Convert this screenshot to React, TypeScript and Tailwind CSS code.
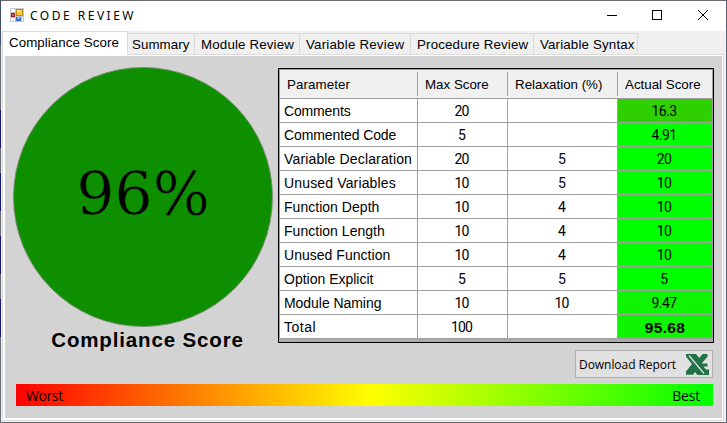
const tabs = [
  { label: "Summary", box: "w-[67px]", text: "pl-[4px] tracking-[0.05px]" },
  { label: "Module Review", box: "w-[105px]", text: "pl-[6px] tracking-[0.15px]" },
  { label: "Variable Review", box: "w-[111px]", text: "pl-[6px] tracking-[0.2px]" },
  { label: "Procedure Review", box: "w-[123px]", text: "pl-[6px] tracking-[0.15px]" },
  { label: "Variable Syntax", box: "w-[104px]", text: "pl-[6px] tracking-[0.15px]" },
];

const rows = [
  { name: "Comments", track: "tracking-[-0.15px]", max: "20", relax: "", score: "16.3", bg: "bg-[#2fd000]" },
  { name: "Commented Code", track: "tracking-[-0.1px]", max: "5", relax: "", score: "4.91", bg: "bg-[#00ff00]" },
  { name: "Variable Declaration", track: "tracking-[0.15px]", max: "20", relax: "5", score: "20", bg: "bg-[#00ff00]" },
  { name: "Unused Variables", track: "tracking-[0.15px]", max: "10", relax: "5", score: "10", bg: "bg-[#00ff00]" },
  { name: "Function Depth", track: "tracking-[0.03px]", max: "10", relax: "4", score: "10", bg: "bg-[#00ff00]" },
  { name: "Function Length", track: "tracking-[0.03px]", max: "10", relax: "4", score: "10", bg: "bg-[#00ff00]" },
  { name: "Unused Function", track: "tracking-[0.03px]", max: "10", relax: "4", score: "10", bg: "bg-[#00ff00]" },
  { name: "Option Explicit", track: "tracking-[0px]", max: "5", relax: "5", score: "5", bg: "bg-[#00ff00]" },
  { name: "Module Naming", track: "tracking-[-0.05px]", max: "10", relax: "10", score: "9.47", bg: "bg-[#0df500]" },
  { name: "Total", track: "tracking-[0.5px]", max: "100", relax: "", score: "95.68", bg: "bg-[#0df500]" },
];

function AppIcon() {
  return (
    <svg width="14" height="14" viewBox="0 0 14 14" shapeRendering="crispEdges">
      <rect width="14" height="14" fill="#c3c7cc" />
      <rect x="1" y="1" width="4" height="3" fill="#fff" />
      <rect x="1" y="10" width="4" height="3" fill="#fff" />
      <rect x="12" y="9" width="1" height="4" fill="#fff" />
      <rect x="6" y="1" width="7" height="7" fill="#c98a12" />
      <rect x="7" y="2" width="5" height="5" fill="#fbc93c" />
      <rect x="7" y="2" width="3" height="2" fill="#ffe48a" />
      <rect x="1" y="5" width="4" height="4" fill="#9d1d1d" />
      <rect x="2" y="6" width="2" height="2" fill="#dc5a4a" />
      <rect x="6" y="9" width="5" height="4" fill="#3a6fc8" />
      <rect x="7" y="9" width="3" height="2" fill="#7fb0f0" />
    </svg>
  );
}

function TitleBar() {
  return (
    <header className="flex h-[30px] items-start bg-white">
      <div className="pl-[9px] pt-[7px]"><AppIcon /></div>
      <div className="ml-[6px] mt-[6px] font-['Noto_Sans',sans-serif] text-[12px] leading-[18px] tracking-[2.5px]">CODE REVIEW</div>
      <svg className="ml-auto mr-[17px] mt-[8px]" width="102" height="12" viewBox="0 0 102 12" fill="none" stroke="#000">
        <path d="M0 6.5h10M45.5 1.5h9v9h-9z" shapeRendering="crispEdges" />
        <path d="M91 1l10 10M101 1L91 11" />
      </svg>
    </header>
  );
}

function TabStrip() {
  return (
    <nav className="flex h-[23px] items-end text-[13.33px]">
      <div className="relative -mb-px ml-px h-[24px] w-[126px] border border-b-0 border-[#dcdcdc] bg-white pl-[6px] leading-[21px] tracking-[0.06px] whitespace-nowrap">Compliance Score</div>
      {tabs.map((t) => (
        <div key={t.label} className={`h-[21px] shrink-0 border-r border-t border-[#d9d9d9] leading-[21px] whitespace-nowrap ${t.box} ${t.text}`}>{t.label}</div>
      ))}
    </nav>
  );
}

function ScoreTable() {
  return (
    <div className="h-[275px] w-[436px] border border-black bg-[#ababab]">
      <div className="border-l border-t border-[#a0a0a0]">
        <div className="flex h-[29px] border-b border-r border-[#a0a0a0] bg-[#f0f0f0] py-[2px] text-[13.33px] leading-[25px] whitespace-nowrap">
          <div className="w-[138px] border-r border-[#a0a0a0] pl-[7px] tracking-[0.1px]">Parameter</div>
          <div className="w-[90px] border-r border-[#a0a0a0] pl-[7px]">Max Score</div>
          <div className="w-[110px] border-r border-[#a0a0a0] pl-[7px]">Relaxation (%)</div>
          <div className="pl-[7px]">Actual Score</div>
        </div>
        {rows.map((r) => (
          <div key={r.name} className="grid h-[24px] grid-cols-[138px_90px_110px_95px] text-[13.33px] leading-[25px] whitespace-nowrap *:border-b *:border-r *:border-[#a0a0a0] *:h-[24px]">
            <div className={`bg-white pl-[4px] text-[14px] ${r.track}`}>{r.name}</div>
            <div className="bg-white pr-[2px] text-center font-['Roboto',sans-serif] text-[14px] tracking-[-0.8px]">{r.max}</div>
            <div className="bg-white pr-[2px] text-center font-['Roboto',sans-serif] text-[14px] tracking-[-0.8px]">{r.relax}</div>
            <div className={`text-center ${r.bg} ${r.name === "Total" ? "text-[15.5px] font-bold tracking-[0.3px]" : "pr-[2px] font-['Roboto',sans-serif] text-[14px] tracking-[-0.6px]"}`}>{r.score}</div>
          </div>
        ))}
      </div>
    </div>
  );
}

function ExcelIcon() {
  return (
    <svg width="24" height="21" viewBox="0 0 24 21">
      <path d="M0 0h10l3.300 4L16.500 0H21.500v2.800L15.500 9.500H21.500V12.500H17.500L20 15.500H23V21H11.500L9 18 7 20.800H0V17.500L6 10 0 2.500z" fill="#217346" />
      <path d="M3 1.500L18 19.500" stroke="#e1e1e1" strokeWidth="1.300" />
    </svg>
  );
}

export default function App() {
  return (
    <div className="flex h-[423px] w-[727px] overflow-hidden bg-[#f0f0f0] font-['Liberation_Sans',Arial,sans-serif] text-black">
      <div className="w-px shrink-0 bg-[linear-gradient(#465068_0_45px,#686c74_45px_110px,#17177a_110px_148px,#686c74_148px_173px,#17177a_173px_211px,#686c74_211px_236px,#17177a_236px_274px,#686c74_274px_299px,#17177a_299px_337px,#686c74_337px)]" />
      <div className="w-[725px] border-y border-[#6a6a6a]">
        <TitleBar />
        <TabStrip />
        <main className="ml-px h-[367px] w-[722px] border border-[#dcdcdc] bg-white p-[1px] pb-[2px] pl-[2px]">
          <div className="h-[362px] bg-[#d3d3d3] pt-[11px]">
            <div className="flex h-[283px]">
              <section className="ml-[8px] w-[260px]">
                <div className="flex h-[260px] items-center justify-center rounded-full border border-[#77906f] bg-[#0d8f00] pb-[6px] font-['DejaVu_Serif',serif] text-[60px] leading-none [-webkit-text-stroke:0.6px_#0d8f00]">96%</div>
                <h1 className="mt-[1px] pl-[9px] text-center text-[20.5px] leading-[24px] font-bold tracking-[0.85px] whitespace-nowrap">Compliance Score</h1>
              </section>
              <section className="ml-[5px] pt-[1px]"><ScoreTable /></section>
            </div>
            <div className="ml-auto mr-[9px] flex h-[28px] w-[138px] items-center justify-between border border-[#adadad] bg-[#e1e1e1] pl-[3px] pr-[2px] font-['Open_Sans',sans-serif] text-[12px] whitespace-nowrap">
              <span className="pt-[2px] tracking-[-0.05px]">Download Report</span>
              <ExcelIcon />
            </div>
            <div className="ml-[11px] mt-[6px] flex h-[22px] w-[697px] justify-between bg-[linear-gradient(90deg,#ff0000,#ffff00_51%,#00ff00)] pl-[10px] pr-[13px] font-['Open_Sans',sans-serif] text-[14px] leading-[24px]">
              <span className="tracking-[-0.4px]">Worst</span>
              <span className="tracking-[-0.2px]">Best</span>
            </div>
          </div>
        </main>
      </div>
      <div className="w-px shrink-0 bg-[#5f6370]" />
    </div>
  );
}
